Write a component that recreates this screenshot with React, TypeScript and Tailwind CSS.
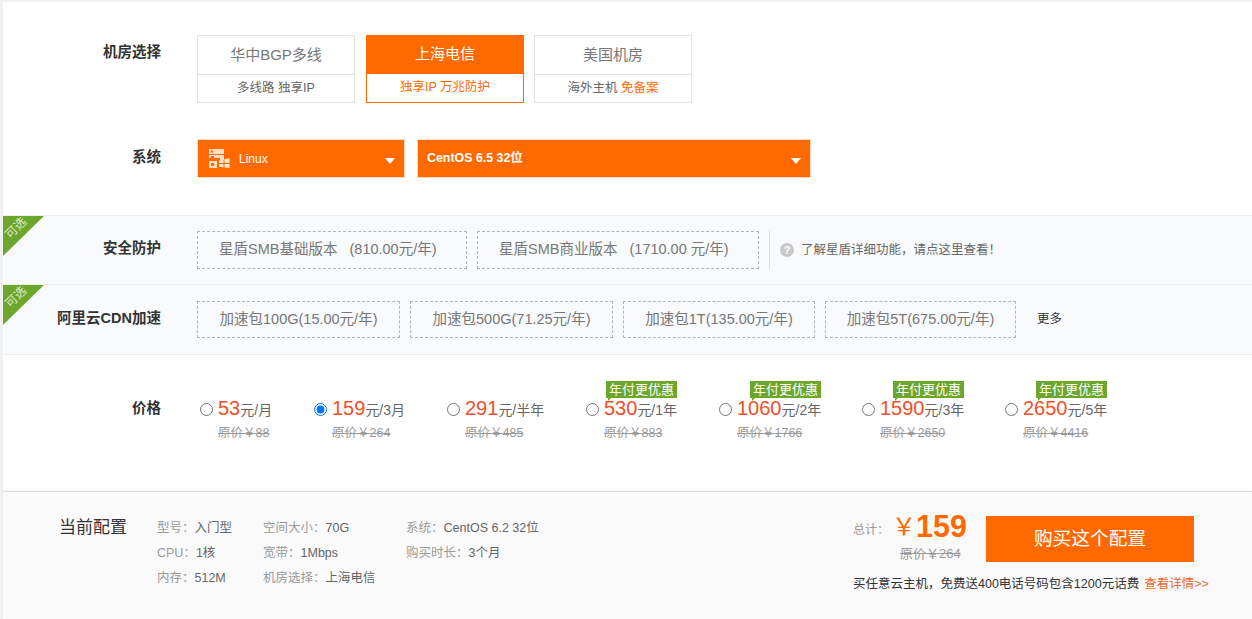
const font = { fontFamily: '"Liberation Sans", "Noto Sans CJK SC", sans-serif' };

const rooms = [
	{ name: "华中BGP多线", sub: "多线路 独享IP" },
	{ name: "上海电信", sub: "独享IP 万兆防护", active: true },
	{ name: "美国机房", sub: "海外主机 ", extra: "免备案" },
];

const prices = [
	{ amount: "53", unit: "元/月", old: "88", width: "w-[114px]" },
	{ amount: "159", unit: "元/3月", old: "264", width: "w-[133px]", checked: true },
	{ amount: "291", unit: "元/半年", old: "485", width: "w-[139px]" },
	{ amount: "530", unit: "元/1年", old: "883", width: "w-[133px]", badge: "left-[20px]" },
	{ amount: "1060", unit: "元/2年", old: "1766", width: "w-[143px]", badge: "left-[31px]" },
	{ amount: "1590", unit: "元/3年", old: "2650", width: "w-[143px]", badge: "left-[31px]" },
	{ amount: "2650", unit: "元/5年", old: "4416", width: "w-[110px]", badge: "left-[31px]" },
];

const cdnPacks = [
	{ text: "加速包100G(15.00元/年)", width: "w-[203px]" },
	{ text: "加速包500G(71.25元/年)", width: "w-[203px]" },
	{ text: "加速包1T(135.00元/年)", width: "w-[192px]" },
	{ text: "加速包5T(675.00元/年)", width: "w-[191px]" },
];

const specs = [
	{ width: "w-[106px]", rows: [["型号：", "入门型"], ["CPU：", "1核"], ["内存：", "512M"]] },
	{ width: "w-[143px]", rows: [["空间大小：", "70G"], ["宽带：", "1Mbps"], ["机房选择：", "上海电信"]] },
	{ width: "w-[150px]", rows: [["系统：", "CentOS 6.2 32位"], ["购买时长：", "3个月"]] },
];

function OptionalTag() {
	return (
		<div className="absolute left-0 top-0 w-[41px] h-[41px]">
			<svg width="41" height="41" viewBox="0 0 41 41" className="absolute left-0 top-0">
				<path d="M0 0H41L0 40Z" fill="#6ca62c" />
			</svg>
			<span className="absolute left-[1px] top-[5px] w-[24px] text-center text-[12px] leading-[14px] text-[#dcebc9] -rotate-45">
				可选
			</span>
		</div>
	);
}

function OsIcon() {
	return (
		<svg width="21" height="19" viewBox="0 0 21 19" fill="none">
			<path d="M0 0H15V5H0ZM0 6H15V11H11V9H0ZM0 12H8V19H0Z" fill="#ffdcc0" />
			<rect x="2" y="1.5" width="2" height="2" fill="#ff6a00" />
			<rect x="2" y="7" width="3" height="2" fill="#ff6a00" />
			<rect x="2" y="14" width="3" height="3" fill="#ff6a00" />
			<path d="M10 11.5L14.5 10.5V14H10ZM15.5 10.3L20.5 9.2V14H15.5ZM10 15H14.5V18.5L10 17.6ZM15.5 15H20.5V19L15.5 18.4Z" fill="#ffe6d2" />
		</svg>
	);
}

function Caret() {
	return <span className="ml-auto mt-[4px] w-0 h-0 border-x-[5px] border-x-transparent border-t-[6px] border-t-white" />;
}

function Label({ children }: { children: string }) {
	return <div className="w-[161px] shrink-0 text-right text-[14.5px] font-bold text-[#333]">{children}</div>;
}

export default function App() {
	return (
		<div className="w-[1252px] h-[619px] overflow-hidden bg-[#f1f1f1] pl-[3px] pt-[2px]" style={font}>
			<div className="relative bg-white h-[617px] flex flex-col">
				{/* 机房 */}
				<div className="flex pt-[33px] h-[137px] -ml-[3px]">
					<div className="pt-[7px]">
						<Label>机房选择</Label>
					</div>
					<div className="ml-[36px] flex gap-[11px]">
						{rooms.map((r) => (
							<div key={r.name} className={"w-[158px] h-[68px] border last:-ml-px " + (r.active ? "border-[#ff6a00]" : "border-[#e1e1e1]")}>
								<div
									className={
										"h-[39px] flex items-center justify-center text-[15px] " +
										(r.active ? "bg-[#ff6a00] text-white -mt-px -mx-px" : "text-[#777] border-b border-[#e1e1e1]")
									}
								>
									{r.name}
								</div>
								<div className={"h-[27px] flex items-center justify-center text-[12.5px] whitespace-pre " + (r.active ? "text-[#ff6a00]" : "text-[#666]")}>
									<span>
										{r.sub}
										{r.extra && <span className="text-[#ff6a00]">{r.extra}</span>}
									</span>
								</div>
							</div>
						))}
					</div>
				</div>

				{/* 系统 */}
				<div className="flex h-[76px] -ml-[3px]">
					<div className="pt-[8px]">
						<Label>系统</Label>
					</div>
					<div className="ml-[36px] flex gap-[12px]">
						<div className="w-[208px] h-[39px] bg-[#ff6a00] border border-[#ffd9bf] flex items-center pl-[11px] pr-[9px] text-white text-[12px]">
							<OsIcon />
							<span className="ml-[9px]">Linux</span>
							<Caret />
						</div>
						<div className="w-[394px] h-[39px] bg-[#ff6a00] border border-[#ffd9bf] flex items-center pl-[9px] pr-[9px] text-white text-[12.4px] font-bold">
							<span>CentOS 6.5 32位</span>
							<Caret />
						</div>
					</div>
				</div>

				{/* 安全防护 */}
				<div className="relative flex items-center h-[69px] bg-[#f9fafc] border-t border-[#eeeeee]">
					<OptionalTag />
					<div className="-ml-[3px] -mt-[2px]">
						<Label>安全防护</Label>
					</div>
					<div className="ml-[36px] flex items-center">
						<div className="w-[270px] h-[38px] border border-dashed border-[#b5b5b5] flex items-center pl-[21px] text-[14.5px] text-[#777]">
							星盾SMB基础版本&nbsp;&nbsp;&nbsp;(810.00元/年)
						</div>
						<div className="ml-[10px] w-[282px] h-[38px] border border-dashed border-[#b5b5b5] flex items-center pl-[21px] text-[14.5px] text-[#777]">
							星盾SMB商业版本&nbsp;&nbsp;&nbsp;(1710.00 元/年)
						</div>
						<div className="ml-[10px] w-px h-[38px] bg-[#dddddd]" />
						<div className="ml-[10px] flex items-center gap-[7px] text-[12.5px] text-[#666]">
							<span className="w-[14px] h-[14px] rounded-full bg-[#c9c9c9] text-white text-[11px] font-bold leading-[14px] text-center">?</span>
							了解星盾详细功能，请点这里查看！
						</div>
					</div>
				</div>

				{/* CDN */}
				<div className="relative flex items-center h-[71px] bg-[#f9fafc] border-t border-[#eeeeee] border-b">
					<OptionalTag />
					<div className="-ml-[3px] -mt-[1px]">
						<Label>阿里云CDN加速</Label>
					</div>
					<div className="ml-[36px] flex items-center gap-[10px]">
						{cdnPacks.map((p) => (
							<div key={p.text} className={p.width + " h-[37px] border border-dashed border-[#b5b5b5] flex items-center justify-center text-[14.5px] text-[#777]"}>
								{p.text}
							</div>
						))}
						<span className="ml-[11px] text-[12.5px] text-[#333]">更多</span>
					</div>
				</div>

				{/* 价格 */}
				<div className="flex h-[136px] pt-[44px]">
					<div className="-ml-[3px] -mt-[1px]">
						<Label>价格</Label>
					</div>
					<div className="ml-[39px] flex">
						{prices.map((p) => (
							<div key={p.amount} className={"relative shrink-0 " + p.width}>
								{p.badge && (
									<div className={"absolute -top-[18px] w-[71px] h-[17px] bg-[#6ca62c] text-white text-[13px] leading-[17px] text-center " + p.badge}>
										年付更优惠
										<span className="absolute left-[2px] top-full w-0 h-0 border-r-[3px] border-r-transparent border-t-[3px] border-t-[#6ca62c]" />
									</div>
								)}
								<div className="flex items-center h-[20px]">
									<input type="radio" readOnly checked={!!p.checked} className="w-[13px] h-[13px] m-0 accent-[#0075ff]" />
									<span className="ml-[5px] flex items-baseline">
										<span className="text-[20px] leading-[20px] text-[#f0502a]">{p.amount}</span>
										<span className="text-[14px] leading-[20px] text-[#666]">{p.unit}</span>
									</span>
								</div>
								<div className="ml-[18px] mt-[5px] text-[12.5px] text-[#999] line-through">原价￥{p.old}</div>
							</div>
						))}
					</div>
				</div>

				{/* 当前配置 */}
				<div className="flex-1 bg-[#fafafa] border-t border-[#dddddd] shadow-[0_-1px_2px_rgba(0,0,0,0.06)] flex">
					<div className="w-[154px] shrink-0 pl-[56px] pt-[24px] text-[17px] leading-[24px] text-[#333]">当前配置</div>
					<div className="flex pt-[24px] w-[399px] text-[12.5px] leading-[25px]">
						{specs.map((col, i) => (
							<div key={i} className={col.width + " shrink-0"}>
								{col.rows.map(([k, v]) => (
									<div key={k}>
										<span className="text-[#999]">{k}</span>
										<span className="text-[#666]">{v}</span>
									</div>
								))}
							</div>
						))}
					</div>
					<div className="ml-[297px] pt-[15px]">
						<div className="flex">
							<div className="w-[133px] shrink-0">
								<div className="flex items-center h-[39px]">
									<span className="text-[12px] text-[#999] mt-[6px]">总计：</span>
									<span className="ml-[3px] text-[24px] text-[#ff6a00]">￥</span>
									<span className="text-[30.5px] font-bold text-[#ff6a00]">159</span>
								</div>
								<div className="ml-[47px] text-[13px] leading-[16px] text-[#999] line-through">原价￥264</div>
							</div>
							<div className="mt-[9px] w-[208px] h-[46px] bg-[#ff6a00] text-white text-[18.7px] flex items-center justify-center">购买这个配置</div>
						</div>
						<div className="mt-[13px] text-[12.5px] text-[#333] whitespace-nowrap">
							买任意云主机，免费送400电话号码包含1200元话费
							<span className="ml-[5px] text-[#e9692a]">查看详情&gt;&gt;</span>
						</div>
					</div>
				</div>
			</div>
		</div>
	);
}
